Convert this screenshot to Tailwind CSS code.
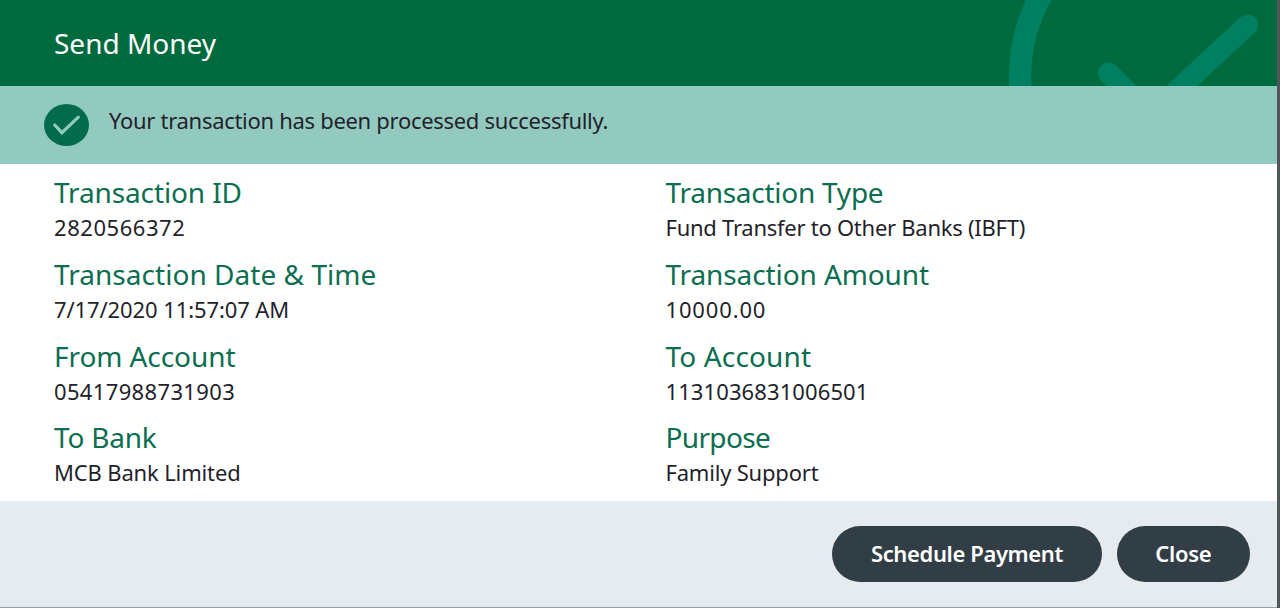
<!DOCTYPE html>
<html lang="en">
<head>
<meta charset="utf-8">
<title>Send Money</title>
<script src="https://cdn.jsdelivr.net/npm/@tailwindcss/browser@4"></script>
</head>
<body class="h-[608px] overflow-hidden bg-[#505759] font-['Noto_Sans',sans-serif] text-[22px] whitespace-nowrap text-[#231f2b]">
<main class="flex h-[608px] w-[1277px] flex-col border-b border-[#9a9fa3] bg-white">
  <header class="relative flex h-[86px] items-center overflow-hidden bg-[#006a3f] pl-[54px]">
    <svg class="absolute inset-y-0 right-0 h-[86px] w-[277px]" viewBox="1000 0 277 86" fill="none" stroke="#007f61" aria-hidden="true">
      <circle cx="1185" cy="76" r="165" stroke-width="22.5"/>
      <path d="M1108.5 73L1150.5 115L1247.5 25" stroke-width="21" stroke-linecap="round" stroke-linejoin="round"/>
    </svg>
    <h1 class="text-[28px] leading-9 text-white">Send Money</h1>
  </header>
  <div class="flex h-[78px] bg-[#93cac0] pl-11">
    <svg class="mt-[18px] h-[42px] w-[45px]" viewBox="0 0 45 42" fill="none" aria-hidden="true">
      <ellipse cx="22.5" cy="21" rx="22.5" ry="21" fill="#006c4b"/>
      <path d="M10.8 21L17.9 28.7L34.3 13.2" stroke="#93cac0" stroke-width="3.2" stroke-linecap="round"/>
    </svg>
    <p class="mt-[18px] ml-5 leading-8 tracking-[-0.3px]">Your transaction has been processed successfully.</p>
  </div>
  <dl class="grid h-[337px] auto-rows-[81.7px] grid-cols-[611.5px_1fr] pt-[10.3px] pl-[54px] [&_dd]:leading-[34px] [&_dt]:text-[28px] [&_dt]:leading-9 [&_dt]:text-[#0b6e50]">
    <div><dt class="tracking-[-0.12px]">Transaction ID</dt><dd class="tracking-[0.55px]">2820566372</dd></div>
    <div><dt class="tracking-[-0.25px]">Transaction Type</dt><dd class="tracking-[-0.26px]">Fund Transfer to Other Banks (IBFT)</dd></div>
    <div><dt class="tracking-[0.04px]">Transaction Date &amp; Time</dt><dd class="tracking-[-0.1px]">7/17/2020 11:57:07 AM</dd></div>
    <div><dt class="tracking-[-0.1px]">Transaction Amount</dt><dd class="tracking-[0.85px]">10000.00</dd></div>
    <div><dt class="tracking-[-0.08px]">From Account</dt><dd class="tracking-[0.35px]">05417988731903</dd></div>
    <div><dt class="tracking-[0.15px]">To Account</dt><dd class="tracking-[0.1px]">1131036831006501</dd></div>
    <div><dt class="tracking-[-0.2px]">To Bank</dt><dd class="tracking-[-0.15px]">MCB Bank Limited</dd></div>
    <div><dt class="tracking-[-0.65px]">Purpose</dt><dd class="tracking-[-0.2px]">Family Support</dd></div>
  </dl>
  <footer class="flex h-[106px] items-center justify-end gap-[14.5px] bg-[#e6ebf0] pr-[27px]">
    <button class="h-14 w-[270px] rounded-full bg-[#323e46] pb-0.5 font-semibold tracking-[-0.38px] text-white">Schedule Payment</button>
    <button class="h-14 w-[133.5px] rounded-full bg-[#323e46] pb-0.5 font-semibold tracking-[-0.3px] text-white">Close</button>
  </footer>
</main>
</body>
</html>
